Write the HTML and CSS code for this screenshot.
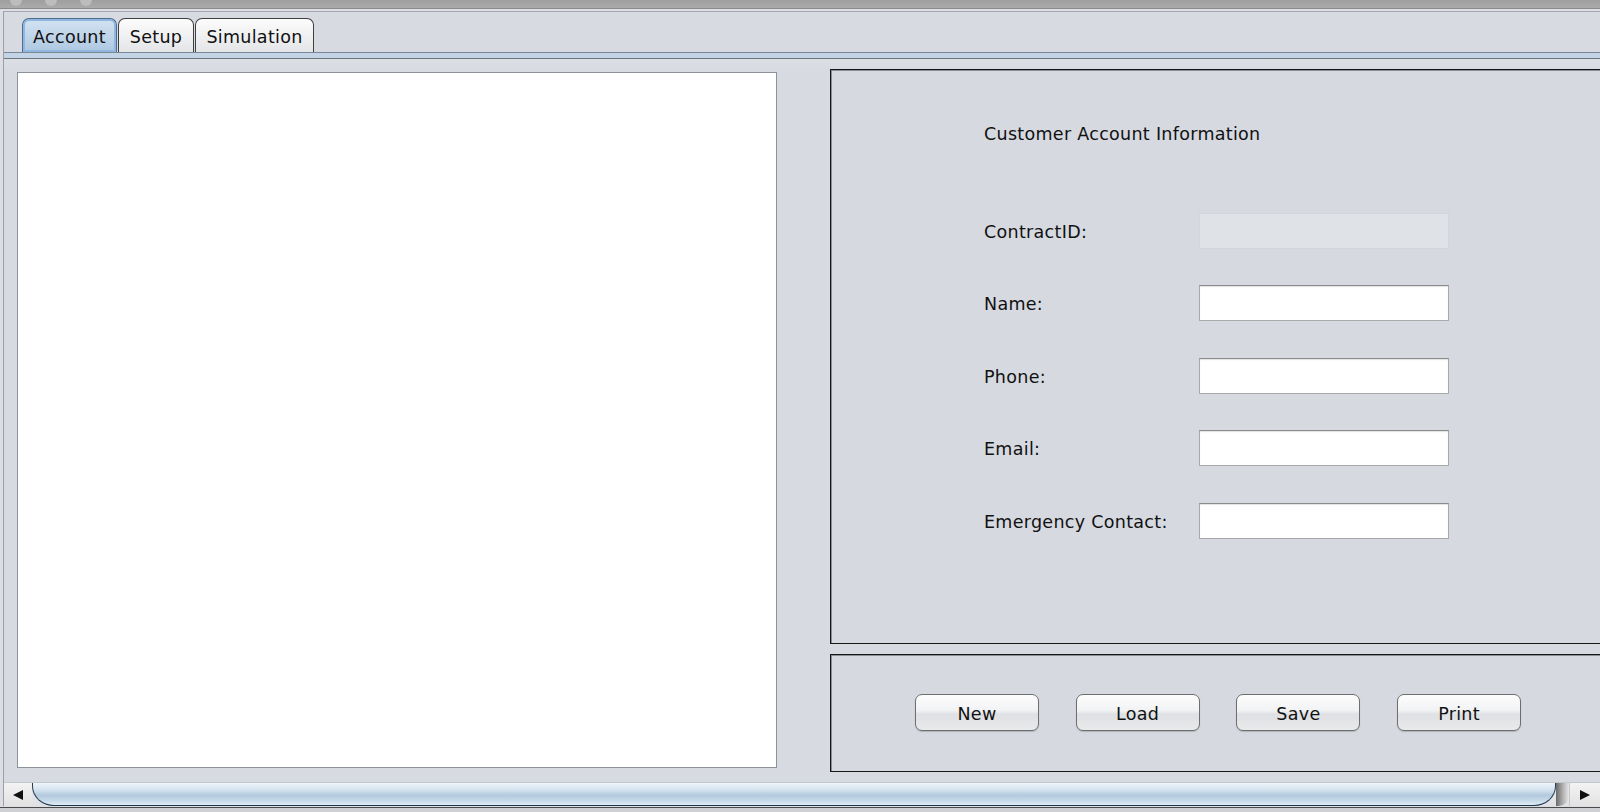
FILE: index.html
```html
<!DOCTYPE html>
<html>
<head>
<meta charset="utf-8">
<link rel="stylesheet" href="styles.css">
</head>
<body>
<div class="titlebar">
  <span class="light"></span><span class="light"></span><span class="light"></span>
</div>
<div class="window">
  <div class="pane">
    <div class="tabs">
      <div class="tab tab-account active">Account</div>
      <div class="tab tab-setup">Setup</div>
      <div class="tab tab-sim">Simulation</div>
    </div>
    <div class="tabline"></div>
    <div class="content">
      <div class="list"></div>
      <div class="right">
        <div class="info">
          <div class="title">Customer Account Information</div>
          <div class="form">
            <div class="label">ContractID:</div><div class="field disabled"></div>
            <div class="label">Name:</div><div class="field"></div>
            <div class="label">Phone:</div><div class="field"></div>
            <div class="label">Email:</div><div class="field"></div>
            <div class="label">Emergency Contact:</div><div class="field"></div>
          </div>
        </div>
        <div class="actions">
          <button class="btn">New</button>
          <button class="btn">Load</button>
          <button class="btn">Save</button>
          <button class="btn">Print</button>
        </div>
      </div>
    </div>
    <div class="scrollbar">
      <div class="arrow left-arrow"><svg width="12" height="12" viewBox="0 0 12 12"><polygon points="11,1 11,11 1,6" fill="#111"/></svg></div>
      <div class="thumb"></div>
      <div class="cap"></div>
      <div class="arrow right-arrow"><svg width="12" height="12" viewBox="0 0 12 12"><polygon points="1,1 1,11 11,6" fill="#111"/></svg></div>
    </div>
  </div>
</div>
<div class="bottomstrip"></div>
</body>
</html>
```

FILE: styles.css
```css
html, body {
  margin: 0;
  padding: 0;
}
body {
  width: 1600px;
  height: 812px;
  overflow: hidden;
  background: #d7dae1;
  font-family: "DejaVu Sans", "Liberation Sans", sans-serif;
  font-size: 17.5px;
  letter-spacing: 0.3px;
  color: #111;
}
.titlebar {
  height: 8px;
  background: linear-gradient(#9f9f9f, #ababab);
  border-bottom: 1px solid #8a8a8a;
  display: flex;
  gap: 23px;
  padding-left: 10px;
  overflow: hidden;
}
.light {
  width: 12px;
  height: 12px;
  margin-top: -6px;
  border-radius: 50%;
  background: #bdbdbd;
}
.window {
  height: 796px;
  padding-top: 2px;
  background: #dcdee3;
}
.pane {
  margin-left: 3px;
  height: 794px;
  border-left: 1px solid #9ba0a8;
  border-top: 1px solid #a3a7ae;
  background: #d7dae1;
  display: flex;
  flex-direction: column;
}
.tabs {
  display: flex;
  padding: 6px 0 0 18px;
  height: 34px;
  background: #d7dae1;
}
.tab {
  box-sizing: border-box;
  height: 34px;
  border: 1px solid #3f3f3f;
  border-bottom: none;
  border-radius: 7px 7px 0 0;
  background: linear-gradient(#fcfcfc, #e4e5e8);
  display: flex;
  align-items: center;
  justify-content: center;
  margin-right: 1px;
  padding-top: 3px;
}
.tab-account { width: 95px; }
.tab-setup { width: 76px; }
.tab-sim { width: 119px; }
.tab.active {
  border-color: #4d6b8c;
  background: linear-gradient(#d3e3f2, #adc8e2);
  box-shadow: inset 0 0 0 2px #8fb7df;
}
.tabline {
  height: 5px;
  border-top: 1px solid #7b8795;
  border-bottom: 1px solid #6f737a;
  background: #c2d4e5;
}
.content {
  height: 722px;
  display: flex;
  overflow: hidden;
  padding-left: 13px;
  background: linear-gradient(#dcdfe4, #d7dae1 12px);
}
.list {
  flex: none;
  width: 760px;
  height: 696px;
  margin-top: 13px;
  box-sizing: border-box;
  border: 1px solid #8d929b;
  background: #fff;
}
.right {
  flex: none;
  margin-left: 53px;
  margin-top: 10px;
  width: 820px;
  display: flex;
  flex-direction: column;
  gap: 10px;
}
.info {
  box-sizing: border-box;
  height: 575px;
  border: 1px solid #161616;
  box-shadow: inset 1px 1px 0 #8a8d93;
  background: #d6d9e0;
  padding: 53px 0 0 153px;
}
.title {
  height: 22px;
  line-height: 22px;
}
.form {
  margin-top: 68px;
  display: grid;
  grid-template-columns: 215px 250px;
  grid-auto-rows: 36px;
  row-gap: 36.5px;
  align-items: center;
}
.label {
  line-height: 22px;
  padding-top: 2px;
}
.field {
  box-sizing: border-box;
  height: 36px;
  width: 250px;
  background: #fff;
  border: 1px solid #a9a9a9;
  border-top-color: #8b8b8b;
  box-shadow: inset 0 1px 1px rgba(0, 0, 0, 0.12);
}
.field.disabled {
  background: #dfe2e7;
  border-color: #d2d5da;
  box-shadow: none;
}
.actions {
  box-sizing: border-box;
  height: 118px;
  border: 1px solid #161616;
  box-shadow: inset 1px 1px 0 #8a8d93;
  background: #d6d9e0;
  padding: 39px 0 0 84px;
  display: flex;
  align-items: flex-start;
  gap: 36.7px;
}
.btn {
  width: 124px;
  height: 37px;
  box-sizing: border-box;
  border: 1px solid #6e6e6e;
  border-radius: 7px;
  background: linear-gradient(#fdfdfd 0%, #f1f2f4 45%, #dfe0e3 55%, #e9eaec 100%);
  box-shadow: 0 1px 1px rgba(0, 0, 0, 0.18);
  font-family: "DejaVu Sans", "Liberation Sans", sans-serif;
  font-size: 17.5px;
  letter-spacing: 0.3px;
  color: #111;
  padding: 3px 0 0 0;
}
.scrollbar {
  height: 24px;
  margin-top: 10px;
  display: flex;
  background: linear-gradient(#e9eaed, #dfe1e5);
  border-top: 1px solid #c4c7cc;
  box-sizing: border-box;
}
.arrow {
  display: flex;
  align-items: center;
  justify-content: center;
  background: linear-gradient(#f3f3f3, #e2e2e2);
}
.left-arrow {
  width: 28px;
}
.right-arrow {
  width: 30px;
  border-left: 1px solid #c8c8c8;
}
.thumb {
  flex: 1;
  box-sizing: border-box;
  border-left: 1.5px solid #273a50;
  border-right: 1.5px solid #273a50;
  border-bottom: 1.5px solid #1f3650;
  border-radius: 0 0 22px 22px / 0 0 20px 20px;
  background: linear-gradient(#eef4fa 0%, #d6e4f0 30%, #b3cadd 55%, #c6d9e8 80%, #dfebf4 100%);
}
.cap {
  width: 13px;
  background: linear-gradient(90deg, #6a6a6a, #b9b9b9 60%, #e6e6e6);
  border-radius: 0 0 10px 0;
}
.bottomstrip {
  height: 7px;
  border-top: 1px solid #4a4a4a;
  background: #cfd0d3;
}
```
